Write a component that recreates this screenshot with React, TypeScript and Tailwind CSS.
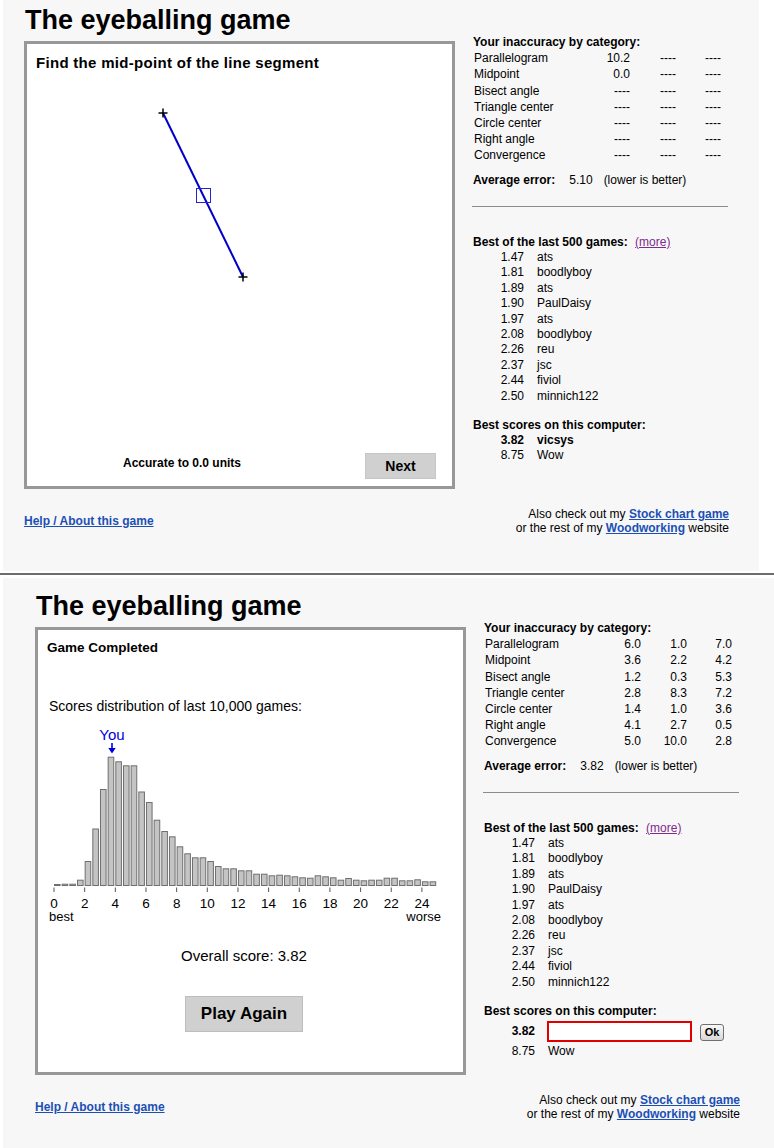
const FONT = "font-['Liberation_Sans',Arial,sans-serif]"

type Row = { label: string; v: string[] }

const firstRows: Row[] = [
  { label: 'Parallelogram', v: ['10.2', '----', '----'] },
  { label: 'Midpoint', v: ['0.0', '----', '----'] },
  { label: 'Bisect angle', v: ['----', '----', '----'] },
  { label: 'Triangle center', v: ['----', '----', '----'] },
  { label: 'Circle center', v: ['----', '----', '----'] },
  { label: 'Right angle', v: ['----', '----', '----'] },
  { label: 'Convergence', v: ['----', '----', '----'] }
]

const doneRows: Row[] = [
  { label: 'Parallelogram', v: ['6.0', '1.0', '7.0'] },
  { label: 'Midpoint', v: ['3.6', '2.2', '4.2'] },
  { label: 'Bisect angle', v: ['1.2', '0.3', '5.3'] },
  { label: 'Triangle center', v: ['2.8', '8.3', '7.2'] },
  { label: 'Circle center', v: ['1.4', '1.0', '3.6'] },
  { label: 'Right angle', v: ['4.1', '2.7', '0.5'] },
  { label: 'Convergence', v: ['5.0', '10.0', '2.8'] }
]

const best500 = [
  ['1.47', 'ats'],
  ['1.81', 'boodlyboy'],
  ['1.89', 'ats'],
  ['1.90', 'PaulDaisy'],
  ['1.97', 'ats'],
  ['2.08', 'boodlyboy'],
  ['2.26', 'reu'],
  ['2.37', 'jsc'],
  ['2.44', 'fiviol'],
  ['2.50', 'minnich122']
]

// bar heights in px, one per half unit from 0 to 25
const bars = [
  1, 1.3, 1.3, 5.3, 24, 56.5, 96, 128.3, 123.7, 119.7, 119.7, 93.5, 83, 65.3,
  54, 48.7, 38.7, 31.7, 27.7, 27.7, 24, 19, 16.7, 16.7, 14.7, 14.7, 11.3, 11.3,
  9.7, 10.3, 9.7, 8.7, 7.7, 7.3, 9.7, 8.7, 7.7, 5.3, 7, 5.3, 4.7, 5.3, 5.3, 7.3,
  7.3, 4.7, 4.7, 5.7, 3.7, 3.7
]

const link = 'font-bold text-[#1c4fb5] underline'

function Plus({ x, y }: { x: number; y: number }) {
  return (
    <g stroke="#000" strokeWidth="1.5">
      <line x1={x - 4.5} y1={y} x2={x + 4.5} y2={y} />
      <line x1={x} y1={y - 4.5} x2={x} y2={y + 4.5} />
    </g>
  )
}

function MidpointBox() {
  return (
    <>
      <div className="pt-[10px] pl-[9px] text-[15px] leading-[18px] font-bold tracking-[0.3px]">
        Find the mid-point of the line segment
      </div>
      <svg width="425" height="381" className="block">
        <line x1="136" y1="41" x2="216" y2="205" stroke="#0000c8" strokeWidth="2" />
        <Plus x={136} y={41} />
        <Plus x={216} y={205} />
        <rect x="169.5" y="116.5" width="14" height="14" fill="none" stroke="#2424d0" strokeWidth="1" />
      </svg>
      <div className="flex items-center h-[26px]">
        <div className="w-[310px] pb-[6px] text-center text-[12px] font-bold">
          Accurate to 0.0 units
        </div>
        <button className="ml-[28px] w-[71px] h-[26px] bg-[#d0d0d0] border border-[#c6c6c6] text-[14px] font-bold">
          Next
        </button>
      </div>
    </>
  )
}

function Chart() {
  const unit = 15.33
  const ticks = Array.from({ length: 13 }, (_, k) => k * 2)
  return (
    <svg width="404" height="205" className="block mt-[5px] ml-[6px]">
      <text x="68" y="20" fontSize="15" fill="#0000dd" textAnchor="middle" fontFamily="Liberation Sans, Arial, sans-serif">
        You
      </text>
      <line x1="68" y1="23" x2="68" y2="30" stroke="#0000dd" strokeWidth="1.6" />
      <path d="M64.3 28 L71.7 28 L68 33.5 Z" fill="#0000dd" />
      {bars.map((h, i) => (
        <rect
          key={i}
          x={10 + i * (unit / 2) + 0.5}
          y={165.5 - h}
          width="5.6"
          height={h}
          fill="#c4c4c4"
          stroke="#6f6f6f"
          strokeWidth="1"
        />
      ))}
      {ticks.map((t) => (
        <g key={t}>
          <line x1={10 + t * unit} y1="167.5" x2={10 + t * unit} y2="172" stroke="#555" strokeWidth="1" />
          <text
            x={10 + t * unit}
            y="187.5"
            fontSize="13.5"
            textAnchor="middle"
            fill="#000"
            fontFamily="Liberation Sans, Arial, sans-serif"
          >
            {t}
          </text>
        </g>
      ))}
      <text x="5" y="201" fontSize="13" fill="#000" fontFamily="Liberation Sans, Arial, sans-serif">
        best
      </text>
      <text x="397" y="201" fontSize="13" fill="#000" textAnchor="end" fontFamily="Liberation Sans, Arial, sans-serif">
        worse
      </text>
    </svg>
  )
}

function CompletedBox() {
  return (
    <>
      <div className="pt-[10px] pl-[9px] text-[13.5px] leading-[16px] font-bold">Game Completed</div>
      <div className="mt-[42px] pl-[11px] text-[14px] leading-[17px]">
        Scores distribution of last 10,000 games:
      </div>
      <Chart />
      <div className="w-[412px] mt-[22px] text-center text-[15px] leading-[18px]">Overall score: 3.82</div>
      <div className="w-[412px] mt-[31px] flex justify-center">
        <button className="w-[118px] h-[36px] bg-[#d0d0d0] border border-[#bdbdbd] text-[17px] font-bold">
          Play Again
        </button>
      </div>
    </>
  )
}

function Stats({ done }: { done: boolean }) {
  const rows = done ? doneRows : firstRows
  return (
    <div className="ml-[18px] mt-[31px] w-[255px] text-[12px]">
      <div className="font-bold leading-[16.2px]">Your inaccuracy by category:</div>
      <div className="leading-[16.2px]">
        {rows.map((r) => (
          <div key={r.label} className="flex">
            <span className="w-[117px] pl-[1px]">{r.label}</span>
            <span className="w-[40px] text-right">{r.v[0]}</span>
            <span className="w-[46px] text-right">{r.v[1]}</span>
            <span className="w-[45px] text-right">{r.v[2]}</span>
          </div>
        ))}
      </div>
      <div className="mt-[8px] leading-[16.2px]">
        <span className="font-bold">Average error:</span>
        <span className="ml-[14px]">{done ? '3.82' : '5.10'}</span>
        <span className="ml-[11px]">(lower is better)</span>
      </div>
      <div className="mt-[18px] -ml-[1px] w-[256px] h-[1px] bg-[#8c8c8c]" />
      <div className="mt-[27px] leading-[16.2px]">
        <span className="font-bold">Best of the last 500 games:</span>{' '}
        <a href="#" className="ml-[4px] text-[#7e2a8e] underline">
          (more)
        </a>
      </div>
      <div className="leading-[15.4px]">
        {best500.map(([s, n], i) => (
          <div key={i} className="flex">
            <span className="w-[51px] text-right">{s}</span>
            <span className="pl-[13px]">{n}</span>
          </div>
        ))}
      </div>
      <div className="mt-[12.6px] font-bold leading-[16.2px]">Best scores on this computer:</div>
      {done ? (
        <div className="mt-[2px] h-[21px] flex items-center">
          <span className="w-[51px] text-right font-bold">3.82</span>
          <input className="ml-[12px] w-[145px] h-[21px] border-2 border-[#e00000] bg-white outline-none" />
          <button className="ml-[8px] w-[24px] h-[17px] mt-[3px] rounded-[3px] border border-[#707070] bg-linear-to-b from-[#f8f8f8] to-[#d8d8d8] text-[11px] font-bold leading-[15px]">
            Ok
          </button>
        </div>
      ) : (
        <div className="flex leading-[15.4px] font-bold">
          <span className="w-[51px] text-right">3.82</span>
          <span className="pl-[13px]">vicsys</span>
        </div>
      )}
      <div className={'flex leading-[15.4px] ' + (done ? 'mt-[2px]' : '')}>
        <span className="w-[51px] text-right">8.75</span>
        <span className="pl-[13px]">Wow</span>
      </div>
    </div>
  )
}

function Page({ done }: { done: boolean }) {
  return (
    <>
      <div className="flex">
        <div className="w-[431px]">
          <h1 className="pl-[1px] mb-[4px] text-[27px] leading-[34px] font-bold">The eyeballing game</h1>
          <div className="h-[448px] border-[3px] border-[#989898] bg-white flex flex-col">
            {done ? <CompletedBox /> : <MidpointBox />}
          </div>
        </div>
        <Stats done={done} />
      </div>
      <div className="mt-[19px] w-[705px] flex items-center justify-between text-[12px] leading-[13.6px]">
        <a href="#" className={link}>
          Help / About this game
        </a>
        <div className="text-right">
          <div>
            Also check out my{' '}
            <a href="#" className={link}>
              Stock chart game
            </a>
          </div>
          <div>
            or the rest of my{' '}
            <a href="#" className={link}>
              Woodworking
            </a>{' '}
            website
          </div>
        </div>
      </div>
    </>
  )
}

export default function App() {
  return (
    <div className={'w-[774px] h-[1148px] overflow-hidden bg-white text-black ' + FONT}>
      <div className="ml-[3px] w-[756px] h-[571px] bg-[#f7f7f7] pt-[3px] pl-[21px]">
        <Page done={false} />
      </div>
      <div className="mt-[2px] h-[2px] bg-[#6d6d6d]" />
      <div className="mt-[3px] ml-[3px] h-[570px] bg-[#f7f7f7] pt-[11px] pl-[32px]">
        <Page done={true} />
      </div>
    </div>
  )
}
